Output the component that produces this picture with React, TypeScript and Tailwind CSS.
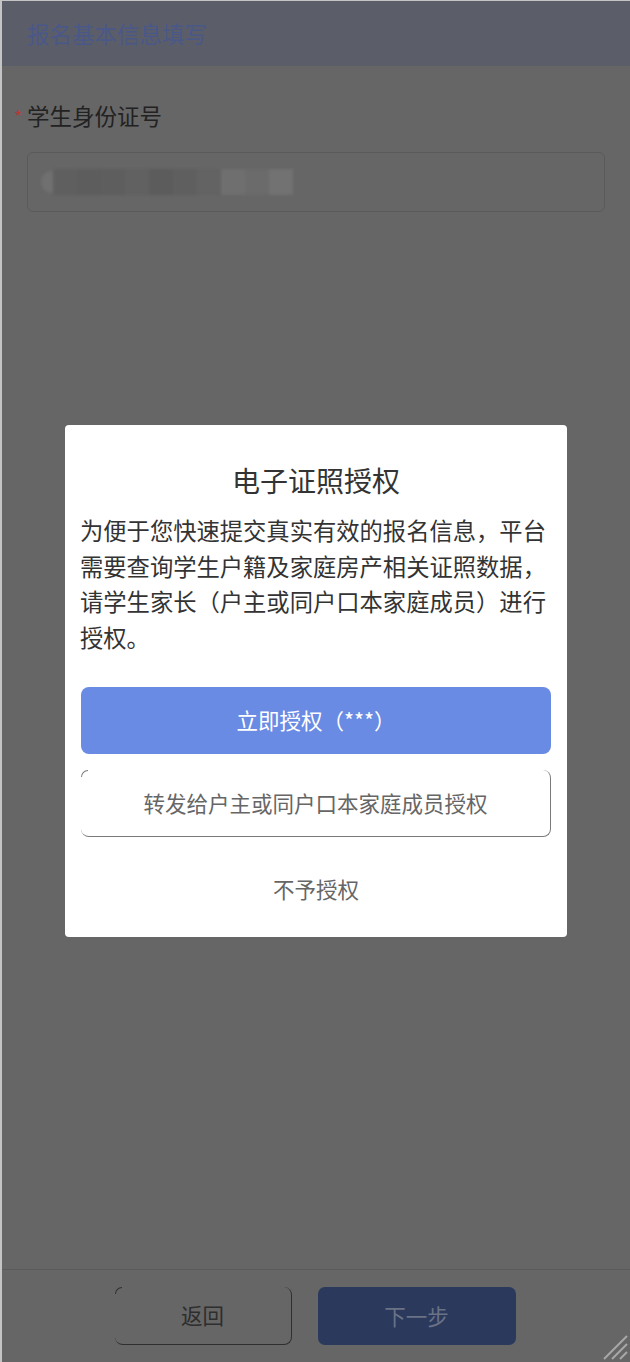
import React from "react";

const font = { fontFamily: '"Noto Sans CJK SC", "Noto Sans", sans-serif' };

function OddButton({ children, className, text }: { children: React.ReactNode; className: string; text: string }) {
  return (
    <button className={`relative flex items-center justify-center border-r-[1.5px] border-b-[1.5px] rounded-[8px] ${className}`}>
      <span className={`absolute left-0 top-0 w-[7px] h-[7px] border-l-[1.5px] border-t-[1.5px] rounded-tl-[8px] ${text}`} />
      {children}
    </button>
  );
}

export default function App() {
  const blocks = ["#5f5f5f", "#5d5d5d", "#5e5e5e", "#616161", "#5c5c5c", "#5f5f5f", "#636363", "#6f6f6f", "#6b6b6b", "#727272"];
  return (
    <div style={font} className="relative w-full h-[1362px] bg-[#666666] border-l-2 border-t border-[#c4c4c4] flex flex-col overflow-hidden">
      <div className="h-[65px] bg-[#5b5e69] flex items-center pl-[25px]">
        <span className="text-[22.5px] text-[#4a5889] leading-none">报名基本信息填写</span>
      </div>
      <div className="px-[25px] pt-[34px] flex-1">
        <div className="flex items-center h-[30px]">
          <span className="text-[#b43a3a] text-[18px] leading-none -ml-[13px] w-[13px] mt-[2px]">*</span>
          <span className="text-[22.5px] text-[#222222] leading-none">学生身份证号</span>
        </div>
        <div className="mt-[22px] h-[60px] rounded-[6px] border border-[#5a5a5a] flex items-center pl-[13px]">
          <div className="flex items-center blur-[1.5px]">
            <div className="w-[12px] h-[22px] bg-[#707070] rounded-l-full" />
            {blocks.map((c, i) => (
              <div key={i} style={{ background: c }} className="w-[24px] h-[26px]" />
            ))}
          </div>
        </div>
      </div>
      <div className="h-[1px] bg-[#5b5b5b]" />
      <div className="h-[92px] flex justify-center gap-[26px] pt-[17px] pr-[2px]">
        <OddButton className="w-[177px] h-[58px] border-[#2f2f2f]" text="border-[#2f2f2f]">
          <span className="text-[21.5px] text-[#2e2e2e]">返回</span>
        </OddButton>
        <button className="w-[198px] h-[58px] rounded-[7px] bg-[#2b395d] flex items-center justify-center">
          <span className="text-[21.5px] text-[#6a7286]">下一步</span>
        </button>
      </div>
      <svg className="absolute right-[2px] bottom-[2px]" width="28" height="28" viewBox="0 0 28 28">
        <line x1="27" y1="4" x2="4" y2="27" stroke="#a8a8a8" strokeWidth="2" />
        <line x1="27" y1="12" x2="12" y2="27" stroke="#a8a8a8" strokeWidth="2" />
        <line x1="27" y1="20" x2="20" y2="27" stroke="#a8a8a8" strokeWidth="2" />
      </svg>

      <div className="absolute left-[63px] top-[424px] w-[502px] h-[512px] bg-white rounded-[4px] px-[15px] pt-[35px] flex flex-col">
        <div className="text-center text-[28px] leading-[40px] text-[#333333]">电子证照授权</div>
        <p className="mt-[13px] text-[23.3px] leading-[35.5px] text-[#333333]">
          为便于您快速提交真实有效的报名信息，平台需要查询学生户籍及家庭房产相关证照数据，请学生家长（户主或同户口本家庭成员）进行授权。
        </p>
        <button className="mt-[32px] mx-[1px] h-[67px] rounded-[8px] bg-[#6a8be4] flex items-center justify-center">
          <span className="text-[21.5px] text-white">立即授权（***）</span>
        </button>
        <OddButton className="mt-[16px] mx-[1px] h-[67px] border-[#7a7a7a]" text="border-[#7a7a7a]">
          <span className="text-[21.5px] text-[#666666]">转发给户主或同户口本家庭成员授权</span>
        </OddButton>
        <button className="mt-[19px] h-[67px] flex items-center justify-center">
          <span className="text-[21.5px] text-[#666666]">不予授权</span>
        </button>
      </div>
    </div>
  );
}
